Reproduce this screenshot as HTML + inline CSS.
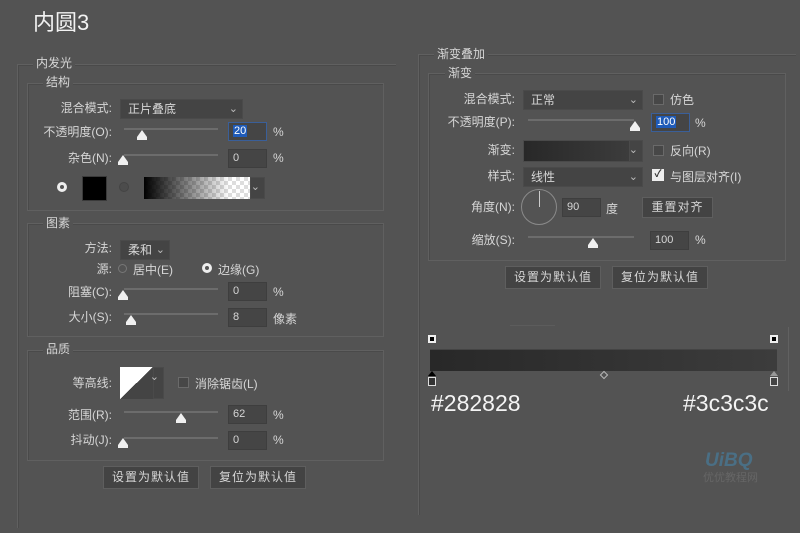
<!DOCTYPE html>
<html><head><meta charset="utf-8"><style>
*{margin:0;padding:0;box-sizing:border-box}
body{width:800px;height:533px;background:#535353;position:relative;overflow:hidden;font-family:"Liberation Sans","Noto Sans CJK SC",sans-serif;font-size:12px;color:#d6d6d6}
.a{position:absolute}
.box{position:absolute;border:1px solid #606060;box-shadow:inset 1px 1px 0 #4a4a4a}
.lg{position:absolute;background:#535353;padding:0 3px;font-size:12px;line-height:14px}
.lb{position:absolute;text-align:right;width:110px;line-height:14px;white-space:nowrap}
.dd{position:absolute;background:#444;border:1px solid #4a4a4a;height:20px;line-height:18px;padding-left:7px}
.dd:after{content:"⌄";position:absolute;right:4px;top:0px;font-size:11px;color:#bbb}
.in{position:absolute;background:#454545;border:1px solid #3e3e3e;height:19px;line-height:17px;padding-left:4px;width:39px;font-size:11px}
.tr{position:absolute;height:2px;background:#6c6c6c;width:94px}
.th{position:absolute;width:0;height:0;border-left:5px solid transparent;border-right:5px solid transparent;border-bottom:7px solid #f0f0f0}
.th:after{content:"";position:absolute;left:-5px;top:7px;width:10px;height:3px;background:#f0f0f0}
.cb{position:absolute;width:11px;height:11px;border:1px solid #6a6a6a;background:#474747}
.bt{position:absolute;background:#434343;border:1px solid #5e5e5e;height:23px;line-height:21px;text-align:center;width:96px;font-size:12px;letter-spacing:1px}
.hl{background:#1f5bb8;color:#fff;padding:0 1px}
</style></head><body>
<div class="a" style="left:33px;top:8px;font-size:22px;color:#f2f2f2;line-height:30px">内圆3</div>

<!-- LEFT -->
<div class="box" style="left:17px;top:64px;width:379px;height:464px;border-bottom:none;border-right:none"></div>
<div class="lg" style="left:33px;top:56px">内发光</div>
<div class="box" style="left:27px;top:83px;width:357px;height:128px"></div>
<div class="lg" style="left:43px;top:75px">结构</div>
<div class="lb" style="left:2px;top:101px">混合模式:</div>
<div class="dd" style="left:120px;top:99px;width:123px">正片叠底</div>
<div class="lb" style="left:2px;top:125px">不透明度(O):</div>
<div class="tr" style="left:124px;top:128px"></div><div class="th" style="left:137px;top:130px"></div>
<div class="in" style="left:228px;top:122px;border-color:#3a5f99"><span class="hl">20</span></div>
<div class="a" style="left:273px;top:125px">%</div>
<div class="lb" style="left:2px;top:151px">杂色(N):</div>
<div class="tr" style="left:124px;top:154px"></div><div class="th" style="left:118px;top:155px"></div>
<div class="in" style="left:228px;top:149px">0</div>
<div class="a" style="left:273px;top:151px">%</div>
<div class="a" style="left:57px;top:182px;width:10px;height:10px;border-radius:50%;border:3px solid #eee;background:#555"></div>
<div class="a" style="left:82px;top:176px;width:25px;height:25px;background:#000;border:1px solid #3a3a3a"></div>
<div class="a" style="left:119px;top:182px;width:10px;height:10px;border-radius:50%;border:1px solid #444;background:#4c4c4c"></div>
<div class="a" style="left:144px;top:177px;width:107px;height:22px;background:linear-gradient(90deg,#000,rgba(0,0,0,0) 80%),repeating-conic-gradient(#ddd 0 25%,#fff 0 50%) 0 0/8px 8px"></div>
<div class="dd" style="left:250px;top:177px;width:15px;height:22px;padding:0"></div>

<div class="box" style="left:27px;top:223px;width:357px;height:114px"></div>
<div class="lg" style="left:43px;top:216px">图素</div>
<div class="lb" style="left:2px;top:241px">方法:</div>
<div class="dd" style="left:120px;top:240px;width:50px">柔和</div>
<div class="lb" style="left:2px;top:262px">源:</div>
<div class="a" style="left:118px;top:264px;width:9px;height:9px;border-radius:50%;border:1px solid #777"></div>
<div class="a" style="left:133px;top:261px">居中(E)</div>
<div class="a" style="left:202px;top:263px;width:10px;height:10px;border-radius:50%;border:3px solid #eee;background:#555"></div>
<div class="a" style="left:218px;top:261px">边缘(G)</div>
<div class="lb" style="left:2px;top:285px">阻塞(C):</div>
<div class="tr" style="left:124px;top:288px"></div><div class="th" style="left:118px;top:290px"></div>
<div class="in" style="left:228px;top:282px">0</div>
<div class="a" style="left:273px;top:285px">%</div>
<div class="lb" style="left:2px;top:310px">大小(S):</div>
<div class="tr" style="left:124px;top:313px"></div><div class="th" style="left:126px;top:315px"></div>
<div class="in" style="left:228px;top:308px">8</div>
<div class="a" style="left:273px;top:310px">像素</div>

<div class="box" style="left:27px;top:350px;width:357px;height:111px"></div>
<div class="lg" style="left:43px;top:342px">品质</div>
<div class="lb" style="left:2px;top:376px">等高线:</div>
<div class="a" style="left:120px;top:367px;width:33px;height:32px;background:linear-gradient(to bottom right,#fff 50%,#444 50%)"></div>
<div class="dd" style="left:153px;top:367px;width:11px;height:32px;padding:0"></div>
<div class="cb" style="left:178px;top:377px"></div>
<div class="a" style="left:195px;top:375px">消除锯齿(L)</div>
<div class="lb" style="left:2px;top:408px">范围(R):</div>
<div class="tr" style="left:124px;top:411px"></div><div class="th" style="left:176px;top:413px"></div>
<div class="in" style="left:228px;top:405px">62</div>
<div class="a" style="left:273px;top:408px">%</div>
<div class="lb" style="left:2px;top:433px">抖动(J):</div>
<div class="tr" style="left:124px;top:437px"></div><div class="th" style="left:118px;top:438px"></div>
<div class="in" style="left:228px;top:431px">0</div>
<div class="a" style="left:273px;top:433px">%</div>
<div class="bt" style="left:103px;top:466px">设置为默认值</div>
<div class="bt" style="left:210px;top:466px">复位为默认值</div>

<!-- RIGHT -->
<div class="box" style="left:418px;top:54px;width:378px;height:461px;border-bottom:none;border-right:none"></div>
<div class="lg" style="left:434px;top:47px">渐变叠加</div>
<div class="box" style="left:428px;top:73px;width:358px;height:188px"></div>
<div class="lg" style="left:445px;top:66px">渐变</div>
<div class="lb" style="left:405px;top:92px">混合模式:</div>
<div class="dd" style="left:523px;top:90px;width:120px">正常</div>
<div class="cb" style="left:653px;top:94px"></div><div class="a" style="left:670px;top:91px">仿色</div>
<div class="lb" style="left:405px;top:115px">不透明度(P):</div>
<div class="tr" style="left:528px;top:119px;width:106px"></div><div class="th" style="left:630px;top:121px"></div>
<div class="in" style="left:651px;top:113px;border-color:#3a5f99"><span class="hl">100</span></div>
<div class="a" style="left:695px;top:116px">%</div>
<div class="lb" style="left:405px;top:143px">渐变:</div>
<div class="a" style="left:523px;top:140px;width:107px;height:22px;background:linear-gradient(90deg,#282828,#3c3c3c);border:1px solid #4a4a4a"></div>
<div class="dd" style="left:629px;top:140px;width:14px;height:22px;padding:0"></div>
<div class="cb" style="left:653px;top:145px"></div><div class="a" style="left:670px;top:142px">反向(R)</div>
<div class="lb" style="left:405px;top:169px">样式:</div>
<div class="dd" style="left:523px;top:167px;width:120px">线性</div>
<div class="a" style="left:652px;top:169px;width:12px;height:12px;background:#eee;color:#333;font-size:10px;line-height:12px;text-align:center;font-weight:bold">✓</div>
<div class="a" style="left:670px;top:168px">与图层对齐(I)</div>
<div class="lb" style="left:405px;top:200px">角度(N):</div>
<div class="a" style="left:521px;top:189px;width:36px;height:36px;border-radius:50%;border:1px solid #8a8a8a"></div>
<div class="a" style="left:539px;top:191px;width:1px;height:16px;background:#ccc"></div>
<div class="in" style="left:562px;top:198px">90</div>
<div class="a" style="left:606px;top:200px">度</div>
<div class="bt" style="left:642px;top:197px;width:71px;height:21px;line-height:19px">重置对齐</div>
<div class="lb" style="left:405px;top:233px">缩放(S):</div>
<div class="tr" style="left:528px;top:236px;width:106px"></div><div class="th" style="left:588px;top:238px"></div>
<div class="in" style="left:650px;top:231px">100</div>
<div class="a" style="left:695px;top:233px">%</div>
<div class="bt" style="left:505px;top:266px">设置为默认值</div>
<div class="bt" style="left:612px;top:266px">复位为默认值</div>

<!-- gradient editor -->
<div class="a" style="left:510px;top:325px;width:45px;height:1px;background:#5c5c5c"></div>
<div class="a" style="left:788px;top:327px;width:1px;height:64px;background:#616161"></div>
<div class="a" style="left:430px;top:349px;width:347px;height:22px;background:linear-gradient(90deg,#282828,#3c3c3c);border-top:1px solid #444"></div>
<div class="a" style="left:428px;top:335px;width:8px;height:8px;background:#000;border:2px solid #eee"></div>
<div class="a" style="left:770px;top:335px;width:8px;height:8px;background:#000;border:2px solid #eee"></div>
<div class="a" style="left:428px;top:371px;width:0;height:0;border-left:4px solid transparent;border-right:4px solid transparent;border-bottom:5px solid #000"></div>
<div class="a" style="left:428px;top:377px;width:8px;height:9px;background:#333;border:1px solid #ddd"></div>
<div class="a" style="left:770px;top:371px;width:0;height:0;border-left:4px solid transparent;border-right:4px solid transparent;border-bottom:5px solid #999"></div>
<div class="a" style="left:770px;top:377px;width:8px;height:9px;background:#444;border:1px solid #ddd"></div>
<div class="a" style="left:601px;top:372px;width:6px;height:6px;border:1px solid #bbb;transform:rotate(45deg)"></div>
<div class="a" style="left:431px;top:389px;font-size:23px;color:#f4f4f4;line-height:28px">#282828</div>
<div class="a" style="left:683px;top:389px;font-size:23px;color:#f4f4f4;line-height:28px">#3c3c3c</div>
<div class="a" style="left:705px;top:451px;font-size:19px;font-weight:bold;color:#4a6f85;line-height:20px;font-style:italic">UiBQ</div>
<div class="a" style="left:703px;top:472px;font-size:11px;color:#666;line-height:12px">优优教程网</div>
</body></html>
